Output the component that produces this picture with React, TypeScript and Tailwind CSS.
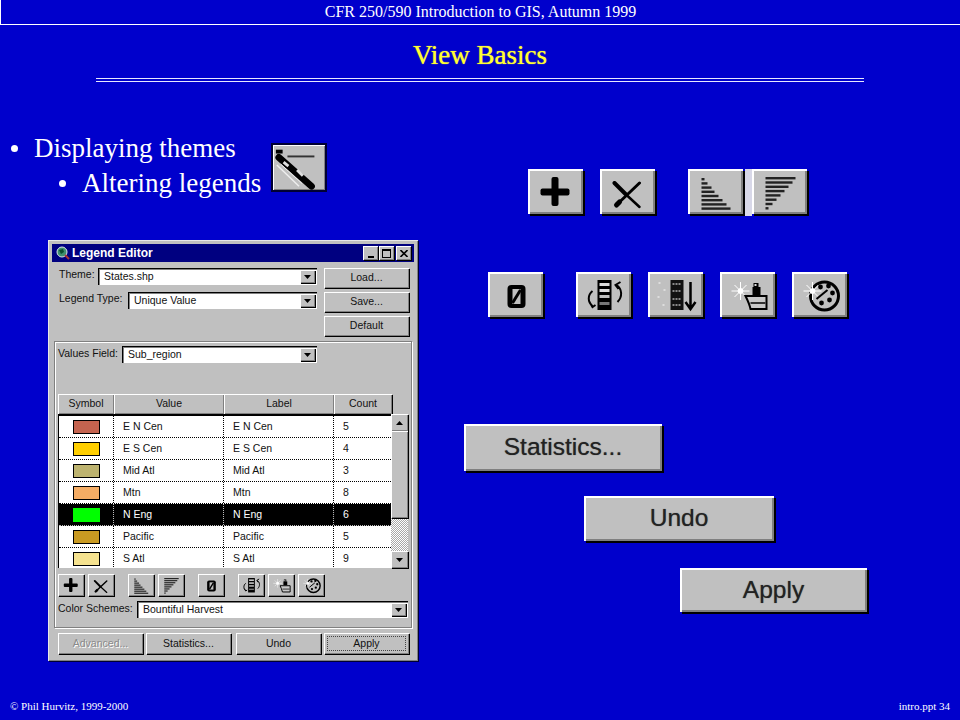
import React from "react";

const raised = "bg-[#c0c0c0] shadow-[inset_1px_1px_0_#ffffff,inset_-1px_-1px_0_#808080,1px_1px_0_#000000]";
const sunken = "bg-white shadow-[inset_1px_1px_0_#000000,inset_2px_2px_0_#808080,inset_-1px_-1px_0_#ffffff]";
const bigRaised = "bg-[#c0c0c0] shadow-[inset_2px_2px_0_#ffffff,inset_-2px_-2px_0_#808080,2px_2px_0_#000000]";

function Star() {
  return (
    <g stroke="#fff" strokeWidth="1">
      <path d="M20 10V28M11 19H29M14 13L26 25M26 13L14 25" />
      <circle cx="20" cy="19" r="2.5" fill="#fff" />
    </g>
  );
}

function PlusIcon() {
  return (
    <g fill="#000">
      <rect x="12" y="19.5" width="29" height="7" rx="2" />
      <rect x="23" y="8" width="7" height="29" rx="2" />
    </g>
  );
}
function CrossIcon() {
  return (
    <g stroke="#000" fill="none" strokeLinecap="round">
      <path d="M14 14L25 25" strokeWidth="4" />
      <path d="M25 25L39 38" strokeWidth="2.5" />
      <path d="M39 14L18 34" strokeWidth="3" />
      <path d="M19 33L16 36" strokeWidth="5" />
    </g>
  );
}
function AscIcon() {
  const w = [3, 6, 10, 13, 17, 21, 25, 29];
  return (
    <g fill="#222">
      {w.map((n, i) => (
        <rect key={i} x="13" y={9 + i * 4.2} width={n} height="2.4" />
      ))}
    </g>
  );
}
function DescIcon() {
  const w = [30, 27, 23, 19, 15, 11, 7, 3];
  return (
    <g fill="#222">
      {w.map((n, i) => (
        <rect key={i} x="13" y={8 + i * 4.3} width={n} height="2.4" />
      ))}
    </g>
  );
}
function ZeroIcon() {
  return (
    <g>
      <rect x="19" y="13" width="18" height="23" rx="4" fill="#000" />
      <rect x="24" y="17" width="8" height="15" fill="#c0c0c0" />
      <path d="M24 31L32 18" stroke="#000" strokeWidth="3" />
    </g>
  );
}
function FlipIcon() {
  return (
    <g>
      <rect x="21" y="8" width="14" height="30" fill="#000" />
      <g fill="#c0c0c0">
        <rect x="23" y="11" width="10" height="3" fill="#ddd" />
        <rect x="23" y="17" width="10" height="3" fill="#ddd" />
        <rect x="23" y="23" width="10" height="3" />
        <rect x="23" y="30" width="10" height="3" fill="#777" />
      </g>
      <path d="M16 19C11 23 11 30 16 34M13 30L16 35L19 33" stroke="#000" strokeWidth="2" fill="none" />
      <path d="M41 30C46 25 46 17 40 13M44 10L39 13L42 17" stroke="#000" strokeWidth="2" fill="none" />
    </g>
  );
}
function SortIcon() {
  return (
    <g>
      <g fill="#ddd">
        <rect x="10" y="10" width="2" height="2" />
        <rect x="15" y="17" width="2" height="2" />
        <rect x="9" y="24" width="2" height="2" />
        <rect x="14" y="32" width="2" height="2" />
      </g>
      <rect x="22" y="8" width="13" height="30" fill="#111" />
      <path d="M24 12H33M24 19L33 19M24 27H33M24 33H33" stroke="#888" strokeWidth="2" strokeDasharray="2 1" />
      <path d="M42 10V36M37 30L42 37L47 30" stroke="#000" strokeWidth="2.5" fill="none" />
    </g>
  );
}
function CleanIcon() {
  return (
    <g>
      <Star />
      <rect x="33" y="11" width="5" height="4" fill="#000" />
      <rect x="32" y="15" width="8" height="8" fill="#000" />
      <rect x="34" y="12" width="2" height="2" fill="#ddd" />
      <path d="M25 24H46V37H30C29 32 27 28 25 24Z" fill="#c8c8c8" stroke="#000" strokeWidth="2" />
      <path d="M30 31H45" stroke="#333" strokeWidth="2" />
    </g>
  );
}
function PaletteIcon() {
  return (
    <g>
      <circle cx="32" cy="24" r="14" fill="#c0c0c0" stroke="#000" strokeWidth="3" />
      <Star />
      <circle cx="28" cy="15" r="2.4" fill="#000" />
      <circle cx="36" cy="14" r="2.4" fill="#000" />
      <circle cx="40" cy="21" r="2.4" fill="#000" />
      <circle cx="37" cy="28" r="2.4" fill="#000" />
      <circle cx="29" cy="31" r="2.4" fill="#000" />
      <path d="M24 27L35 18" stroke="#000" strokeWidth="2" />
    </g>
  );
}
function PencilIcon() {
  return (
    <g>
      <rect x="3" y="4" width="7" height="4" fill="#000" />
      <path d="M15 11H43" stroke="#333" strokeWidth="2" />
      <path d="M6 12L40 42" stroke="#000" strokeWidth="7" strokeLinecap="round" />
      <path d="M11 17L16 21M25 25L31 31" stroke="#ddd" strokeWidth="3" />
      <path d="M4 20L27 42" stroke="#eee" strokeWidth="1.5" />
      <path d="M8 19L30 39" stroke="#eee" strokeWidth="1" />
    </g>
  );
}

function Glyph({ children, className }: { children: React.ReactNode; className?: string }) {
  return (
    <svg viewBox="0 0 54 45" className={className} aria-hidden="true">
      {children}
    </svg>
  );
}

function BigIcon({ children, className }: { children: React.ReactNode; className: string }) {
  return (
    <div className={`${bigRaised} h-[45px] w-[55px] shrink-0 ${className}`}>
      <Glyph className="h-full w-full blur-[0.4px]">{children}</Glyph>
    </div>
  );
}

function SmallIcon({ children, className }: { children: React.ReactNode; className: string }) {
  return (
    <div className={`${raised} h-[22px] w-[26px] shrink-0 ${className}`}>
      <Glyph className="h-full w-full">{children}</Glyph>
    </div>
  );
}

function BigButton({ label, className }: { label: string; className: string }) {
  return (
    <div className={`${bigRaised} flex items-center justify-center font-['Liberation_Sans',sans-serif] text-[24.5px] text-[#222] [text-shadow:0_0_1px_#555] ${className}`}>
      {label}
    </div>
  );
}

function Arrow({ up }: { up?: boolean }) {
  return (
    <svg viewBox="0 0 7 4" className="h-[4px] w-[7px]" aria-hidden="true">
      <path d={up ? "M3.5 0L7 4H0Z" : "M0 0H7L3.5 4Z"} fill="#000" />
    </svg>
  );
}

function Combo({ text, className }: { text: string; className: string }) {
  return (
    <div className={`${sunken} flex h-[17px] items-center justify-between pl-[6px] pr-[2px] ${className}`}>
      <span>{text}</span>
      <div className={`${raised} flex h-[13px] w-[15px] items-center justify-center`}>
        <Arrow />
      </div>
    </div>
  );
}

function WinButton({ children, className }: { children: React.ReactNode; className: string }) {
  return <div className={`${raised} flex h-[20px] items-center justify-center ${className}`}>{children}</div>;
}

const rows = [
  { v: "E N Cen", c: "5", s: "bg-[#c4634f]" },
  { v: "E S Cen", c: "4", s: "bg-[#ffcf00]" },
  { v: "Mid Atl", c: "3", s: "bg-[#bdb36f]" },
  { v: "Mtn", c: "8", s: "bg-[#f4ac64]" },
  { v: "N Eng", c: "6", s: "bg-[#00ff00]", selected: true },
  { v: "Pacific", c: "5", s: "bg-[#c99a22]" },
  { v: "S Atl", c: "9", s: "bg-[#f5e28f]" },
];

function LegendEditor() {
  return (
    <div className="ml-[48px] flex h-[421px] w-[370px] flex-col bg-[#c0c0c0] p-[4px] font-['Liberation_Sans',sans-serif] text-[10.5px] text-[#111] shadow-[inset_1px_1px_0_#e8e8e8,inset_-1px_-1px_0_#808080,1px_1px_0_#000033]">
      <div className="flex h-[18px] shrink-0 items-center justify-between bg-[#000080] pl-[4px] pr-[3px]">
        <div className="flex items-center gap-[2px]">
          <svg viewBox="0 0 14 14" className="h-[14px] w-[14px]" aria-hidden="true">
            <circle cx="6" cy="6" r="5" fill="#3f8f6f" stroke="#dfe8e8" strokeWidth="1" />
            <path d="M3 4L7 3L8 6L5 8Z" fill="#0b4f2f" />
            <path d="M9 9L13 13" stroke="#a33" strokeWidth="2" />
          </svg>
          <span className="text-[12px] font-bold text-white">Legend Editor</span>
        </div>
        <div className="flex items-center">
          <div className={`${raised} flex h-[14px] w-[15px] items-end justify-center pb-[2px]`}>
            <div className="h-[2px] w-[6px] bg-black" />
          </div>
          <div className={`${raised} ml-[1px] flex h-[14px] w-[15px] items-center justify-center`}>
            <div className="h-[9px] w-[9px] border border-t-2 border-black" />
          </div>
          <div className={`${raised} ml-[2px] flex h-[14px] w-[15px] items-center justify-center`}>
            <svg viewBox="0 0 8 7" className="h-[7px] w-[8px]" aria-hidden="true">
              <path d="M0.5 0L7.5 7M7.5 0L0.5 7" stroke="#000" strokeWidth="1.6" />
            </svg>
          </div>
        </div>
      </div>

      <div className="ml-[3px] mt-[6px] flex h-[68px] shrink-0">
        <div className="flex w-[269px] shrink-0 flex-col gap-[7px]">
          <div className="flex h-[17px] items-center pl-[4px]">
            <span className="mb-[3px] w-[39px]">Theme:</span>
            <Combo text="States.shp" className="w-[219px]" />
          </div>
          <div className="flex h-[17px] items-center pl-[4px]">
            <span className="mb-[3px] w-[69px] whitespace-nowrap">Legend Type:</span>
            <Combo text="Unique Value" className="w-[189px]" />
          </div>
        </div>
        <div className="flex w-[85px] flex-col gap-[4px]">
          <WinButton className="w-[85px]">Load...</WinButton>
          <WinButton className="w-[85px]">Save...</WinButton>
          <WinButton className="w-[85px]">Default</WinButton>
        </div>
      </div>

      <div className="ml-[2px] mt-[5px] flex h-[287px] w-[358px] shrink-0 flex-col border border-[#808080] pl-[3px] pt-[4px] shadow-[inset_1px_1px_0_#ffffff,1px_1px_0_#ffffff]">
        <div className="flex h-[17px] shrink-0 items-center">
          <span className="mb-[2px] w-[64px] whitespace-nowrap">Values Field:</span>
          <Combo text="Sub_region" className="w-[195px]" />
        </div>

        <div className="mt-[31px] flex h-[20px] w-[334px] shrink-0 text-center">
          <div className={`${raised} flex w-[56px] items-center justify-center`}>Symbol</div>
          <div className={`${raised} flex w-[110px] items-center justify-center`}>Value</div>
          <div className={`${raised} flex w-[110px] items-center justify-center`}>Label</div>
          <div className={`${raised} flex w-[58px] items-center justify-center`}>Count</div>
        </div>

        <div className="flex h-[154px] w-[350px] shrink-0">
          <div className="h-[154px] w-[333px] shrink-0 overflow-hidden border-l border-t-2 border-black bg-white">
            {rows.map((r) => (
              <div
                key={r.v}
                className={`flex h-[22px] shrink-0 items-center border-b border-dotted ${r.selected ? "border-[#bbbbbb] bg-black text-white" : "border-black text-[#111]"}`}
              >
                <div className={`flex h-full w-[55px] items-center justify-center border-r border-dotted ${r.selected ? "border-[#bbbbbb]" : "border-black"}`}>
                  <div className={`h-[14px] w-[27px] ${r.s} ${r.selected ? "" : "border border-black"}`} />
                </div>
                <div className={`flex h-full w-[110px] items-center border-r border-dotted pl-[9px] ${r.selected ? "border-[#bbbbbb]" : "border-black"}`}>{r.v}</div>
                <div className={`flex h-full w-[110px] items-center border-r border-dotted pl-[9px] ${r.selected ? "border-[#bbbbbb]" : "border-black"}`}>{r.v}</div>
                <div className="pl-[9px]">{r.c}</div>
              </div>
            ))}
          </div>
          <div className="flex h-[154px] w-[17px] shrink-0 flex-col bg-[repeating-conic-gradient(#ffffff_0_25%,#a8a8a8_0_50%)] bg-[length:2px_2px]">
            <div className={`${raised} flex h-[17px] shrink-0 items-center justify-center`}>
              <Arrow up />
            </div>
            <div className={`${raised} h-[87px] shrink-0`} />
            <div className="flex-1" />
            <div className={`${raised} flex h-[17px] shrink-0 items-center justify-center`}>
              <Arrow />
            </div>
          </div>
        </div>

        <div className="mt-[6px] flex h-[22px] shrink-0">
          <SmallIcon className="ml-0"><PlusIcon /></SmallIcon>
          <SmallIcon className="ml-[4px]"><CrossIcon /></SmallIcon>
          <SmallIcon className="ml-[14px]"><AscIcon /></SmallIcon>
          <SmallIcon className="ml-[4px]"><DescIcon /></SmallIcon>
          <SmallIcon className="ml-[14px]"><ZeroIcon /></SmallIcon>
          <SmallIcon className="ml-[14px]"><FlipIcon /></SmallIcon>
          <SmallIcon className="ml-[4px]"><CleanIcon /></SmallIcon>
          <SmallIcon className="ml-[4px]"><PaletteIcon /></SmallIcon>
        </div>

        <div className="mt-[5px] flex h-[17px] shrink-0 items-center">
          <span className="mb-[2px] w-[79px] whitespace-nowrap">Color Schemes:</span>
          <Combo text="Bountiful Harvest" className="w-[271px]" />
        </div>
      </div>

      <div className="ml-[6px] mt-[5px] flex h-[21px] shrink-0">
        <WinButton className="h-[21px] w-[85px] text-[#8a8a8a] [text-shadow:1px_1px_0_#ffffff]">Advanced...</WinButton>
        <WinButton className="ml-[3px] h-[21px] w-[85px]">Statistics...</WinButton>
        <WinButton className="ml-[5px] h-[21px] w-[85px]">Undo</WinButton>
        <WinButton className="ml-[3px] h-[21px] w-[85px] p-[3px]">
          <div className="flex h-full w-full items-center justify-center border border-dotted border-[#444]">Apply</div>
        </WinButton>
      </div>
    </div>
  );
}

export default function App() {
  return (
    <div className="flex h-[720px] w-[960px] flex-col overflow-hidden bg-[#0000cc] font-['Liberation_Serif',serif] text-white">
      <header className="flex h-[25px] shrink-0 items-center justify-center border-b border-l border-white text-[16px]">
        CFR 250/590 Introduction to GIS, Autumn 1999
      </header>

      <div className="flex h-[53px] shrink-0 items-center justify-center pt-[7px] text-[27px] text-[#ffff33] [text-shadow:0_0_1px_#ffff33]">View Basics</div>
      <div className="mx-[96px] h-[4px] shrink-0 border-y border-[#e8e8ff]" />

      <main className="flex h-[619px] shrink-0">
        <div className="flex w-[464px] shrink-0 flex-col pt-[49px]">
          <div className="flex h-[35px] items-center text-[27px]">
            <span className="ml-[11px] mr-[16px] h-[7px] w-[7px] shrink-0 rounded-full bg-white" />
            <span>Displaying themes</span>
          </div>
          <div className="flex h-[35px] items-center text-[27px]">
            <span className="ml-[59px] mr-[16px] h-[7px] w-[7px] shrink-0 rounded-full bg-white" />
            <span>Altering legends</span>
            <div className="relative ml-[10px] mt-[-33px] h-[49px] w-[56px] shrink-0 border-2 border-[#000033] bg-[#c0c0c0] shadow-[inset_1px_1px_0_#ffffff,inset_-1px_-1px_0_#808080]">
              <Glyph className="h-full w-full blur-[0.3px]"><PencilIcon /></Glyph>
            </div>
          </div>
          <div className="mt-[39px]">
            <LegendEditor />
          </div>
        </div>

        <div className="flex flex-col">
          <div className="ml-[64px] mt-[87px] flex">
            <BigIcon className=""><PlusIcon /></BigIcon>
            <BigIcon className="ml-[17px]"><CrossIcon /></BigIcon>
            <BigIcon className="ml-[33px]"><AscIcon /></BigIcon>
            <div className="ml-[2px] h-[47px] w-[7px] shrink-0 bg-[#d8d8e8]" />
            <BigIcon className=""><DescIcon /></BigIcon>
          </div>
          <div className="ml-[24px] mt-[56px] flex">
            <BigIcon className=""><ZeroIcon /></BigIcon>
            <BigIcon className="ml-[33px]"><FlipIcon /></BigIcon>
            <BigIcon className="ml-[17px]"><SortIcon /></BigIcon>
            <BigIcon className="ml-[17px]"><CleanIcon /></BigIcon>
            <BigIcon className="ml-[17px]"><PaletteIcon /></BigIcon>
          </div>
          <BigButton label="Statistics..." className="mt-[107px] h-[47px] w-[198px]" />
          <BigButton label="Undo" className="ml-[120px] mt-[25px] h-[45px] w-[190px]" />
          <BigButton label="Apply" className="ml-[216px] mt-[27px] h-[44px] w-[187px]" />
        </div>
      </main>

      <footer className="flex h-[19px] shrink-0 items-start justify-between px-[10px] text-[11px]">
        <span className="mt-[-3px]">© Phil Hurvitz, 1999-2000</span>
        <span className="mt-[-3px]">intro.ppt 34</span>
      </footer>
    </div>
  );
}
